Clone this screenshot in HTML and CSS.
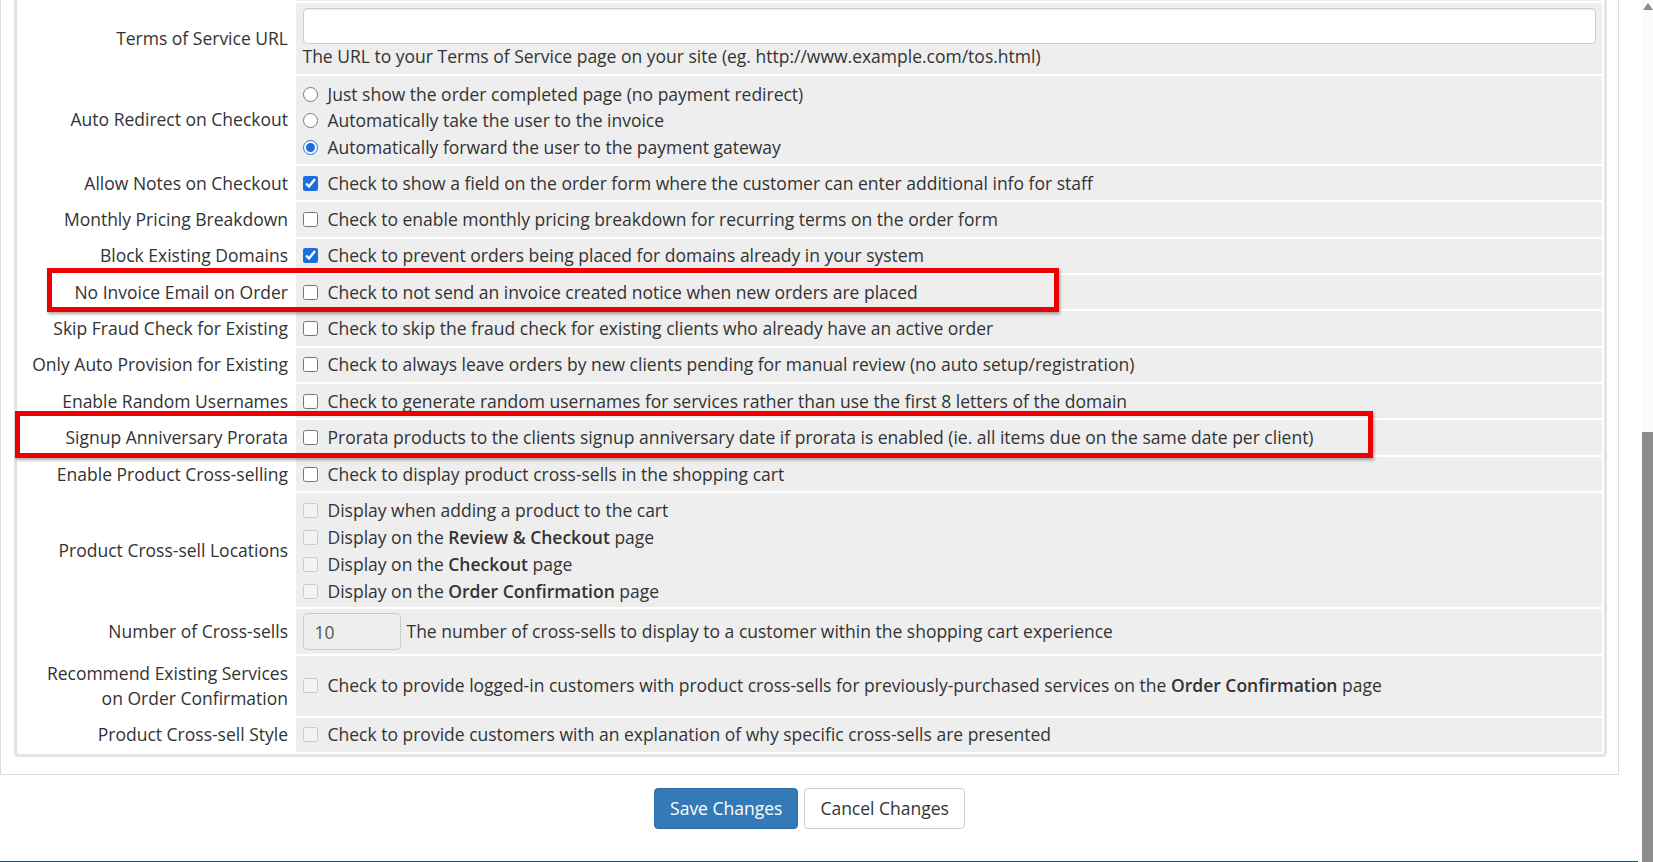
FILE: index.html
```html
<!DOCTYPE html>
<html lang="en">
<head>
    <meta charset="UTF-8">
    <title>Ordering Settings</title>
    <link rel="stylesheet" href="styles.css">
</head>
<body>
    <div class="screen">
        <div class="content">
            <div class="page-box">
                <div class="panel">
                    <table class="form">
                        <!-- row above, scrolled out of view -->
                        <tr class="cut">
                            <td class="label"></td>
                            <td class="field"></td>
                        </tr>
                        <tr>
                            <td class="label">Terms of Service URL</td>
                            <td class="field">
                                <input type="text" class="text-input">
                                <div class="help">The URL to your Terms of Service page on your site (eg. http://www.example.com/tos.html)</div>
                            </td>
                        </tr>
                        <tr>
                            <td class="label">Auto Redirect on Checkout</td>
                            <td class="field radios">
                                <label class="opt line"><input type="radio" name="redirect"> Just show the order completed page (no payment redirect)</label>
                                <label class="opt line"><input type="radio" name="redirect"> Automatically take the user to the invoice</label>
                                <label class="opt line"><input type="radio" name="redirect" checked> Automatically forward the user to the payment gateway</label>
                            </td>
                        </tr>
                        <tr>
                            <td class="label">Allow Notes on Checkout</td>
                            <td class="field"><label class="opt"><input type="checkbox" checked> Check to show a field on the order form where the customer can enter additional info for staff</label></td>
                        </tr>
                        <tr>
                            <td class="label">Monthly Pricing Breakdown</td>
                            <td class="field"><label class="opt"><input type="checkbox"> Check to enable monthly pricing breakdown for recurring terms on the order form</label></td>
                        </tr>
                        <tr>
                            <td class="label">Block Existing Domains</td>
                            <td class="field"><label class="opt"><input type="checkbox" checked> Check to prevent orders being placed for domains already in your system</label></td>
                        </tr>
                        <tr>
                            <td class="label">No Invoice Email on Order</td>
                            <td class="field"><label class="opt"><input type="checkbox"> Check to not send an invoice created notice when new orders are placed</label></td>
                        </tr>
                        <tr>
                            <td class="label">Skip Fraud Check for Existing</td>
                            <td class="field"><label class="opt"><input type="checkbox"> Check to skip the fraud check for existing clients who already have an active order</label></td>
                        </tr>
                        <tr>
                            <td class="label">Only Auto Provision for Existing</td>
                            <td class="field"><label class="opt"><input type="checkbox"> Check to always leave orders by new clients pending for manual review (no auto setup/registration)</label></td>
                        </tr>
                        <tr>
                            <td class="label">Enable Random Usernames</td>
                            <td class="field"><label class="opt"><input type="checkbox"> Check to generate random usernames for services rather than use the first 8 letters of the domain</label></td>
                        </tr>
                        <tr>
                            <td class="label">Signup Anniversary Prorata</td>
                            <td class="field"><label class="opt"><input type="checkbox"> Prorata products to the clients signup anniversary date if prorata is enabled (ie. all items due on the same date per client)</label></td>
                        </tr>
                        <tr>
                            <td class="label">Enable Product Cross-selling</td>
                            <td class="field"><label class="opt"><input type="checkbox"> Check to display product cross-sells in the shopping cart</label></td>
                        </tr>
                        <tr>
                            <td class="label">Product Cross-sell Locations</td>
                            <td class="field locations">
                                <label class="opt line"><input type="checkbox" disabled> Display when adding a product to the cart</label>
                                <label class="opt line"><input type="checkbox" disabled> Display on the&nbsp;<b>Review &amp; Checkout</b>&nbsp;page</label>
                                <label class="opt line"><input type="checkbox" disabled> Display on the&nbsp;<b>Checkout</b>&nbsp;page</label>
                                <label class="opt line"><input type="checkbox" disabled> Display on the&nbsp;<b>Order Confirmation</b>&nbsp;page</label>
                            </td>
                        </tr>
                        <tr>
                            <td class="label">Number of Cross-sells</td>
                            <td class="field number">
                                <div class="opt">
                                    <input type="text" class="num-input" value="10" readonly>
                                    The number of cross-sells to display to a customer within the shopping cart experience
                                </div>
                            </td>
                        </tr>
                        <tr>
                            <td class="label">Recommend Existing Services<br>on Order Confirmation</td>
                            <td class="field"><label class="opt"><input type="checkbox" disabled> Check to provide logged-in customers with product cross-sells for previously-purchased services on the&nbsp;<b>Order Confirmation</b>&nbsp;page</label></td>
                        </tr>
                        <tr>
                            <td class="label">Product Cross-sell Style</td>
                            <td class="field"><label class="opt"><input type="checkbox" disabled> Check to provide customers with an explanation of why specific cross-sells are presented</label></td>
                        </tr>
                    </table>
                </div>
            </div>

            <div class="actions">
                <button class="btn btn-primary">Save Changes</button>
                <button class="btn btn-default">Cancel Changes</button>
            </div>

            <div class="footer-line"></div>
        </div>

        <div class="scrollbar">
            <span class="arrow"></span>
            <div class="thumb"></div>
        </div>
    </div>

    <!-- highlight boxes drawn over the screenshot -->
    <div class="mark mark-invoice"></div>
    <div class="mark mark-prorata"></div>
</body>
</html>
```

FILE: styles.css
```css
* {
    box-sizing: border-box;
}
body {
    margin: 0;
    font-family: "Open Sans", "DejaVu Sans", sans-serif;
    font-size: 17.5px;
    line-height: 25px;
    color: #333;
    background-color: #fff;
    overflow: hidden;
}
.screen {
    display: flex;
    height: 862px;
}
.content {
    width: 1642px;
    display: flex;
    flex-direction: column;
}
.page-box {
    width: 1619px;
    margin-top: -35px;
    padding: 0 11px 17px 13px;
    border: 1px solid #ddd;
    border-top: none;
}
.panel {
    border: 3px solid #e1e5e6;
    border-top: none;
    border-radius: 0 0 4px 4px;
}
.form {
    width: 100%;
    border-spacing: 2px;
}
.form td {
    padding: 4.7px 6px;
    vertical-align: middle;
}
.form .cut td {
    height: 34.4px;
}
.form .label {
    width: 275px;
    text-align: right;
    padding-left: 0;
    background-color: #fff;
}
.form .field {
    background-color: #eee;
    padding-left: 6.5px;
}
.form .radios {
    padding-top: 5px;
    padding-bottom: 3.6px;
}
.form .locations {
    padding-top: 3.5px;
    padding-bottom: 2.5px;
}
.form .number {
    padding-top: 4px;
    padding-bottom: 4px;
}
.opt {
    display: flex;
    align-items: center;
    min-height: 25px;
    white-space: nowrap;
}
.radios .opt.line {
    height: 26.5px;
}
.locations .opt.line {
    height: 27px;
}
.opt b {
    font-weight: 600;
}
input[type="checkbox"],
input[type="radio"] {
    width: 15px;
    height: 15px;
    margin: 0 10px 0 0;
    accent-color: #1a6fdc;
}
.text-input {
    display: block;
    width: 100%;
    height: 36px;
    margin: 0;
    border: 1px solid #ccc;
    border-radius: 4px;
    background-color: #fff;
    box-shadow: inset 0 1px 1px rgba(0, 0, 0, 0.075);
}
.num-input {
    width: 98px;
    height: 37px;
    margin: 0 6px 0 0;
    padding: 0 11px;
    font-family: inherit;
    font-size: 17.5px;
    color: #555;
    background-color: #eee;
    border: 1px solid #ccc;
    border-radius: 4px;
}
.actions {
    display: flex;
    justify-content: center;
    gap: 6px;
    width: 1619px;
    margin-top: 13px;
}
.btn {
    height: 41px;
    padding: 0 15px;
    font-family: inherit;
    font-size: 17.5px;
    border-radius: 4px;
    cursor: pointer;
}
.btn-primary {
    color: #fff;
    background-color: #337ab7;
    border: 1px solid #2e6da4;
}
.btn-default {
    color: #333;
    background-color: #fff;
    border: 1px solid #ccc;
}
.footer-line {
    width: 1638px;
    height: 1px;
    margin-top: auto;
    background-color: #1f4a5b;
}
.scrollbar {
    width: 11px;
    display: flex;
    flex-direction: column;
    background-color: #fbfbfb;
}
.arrow {
    width: 0;
    height: 0;
    margin: 3px auto 0;
    border-left: 5px solid transparent;
    border-right: 5px solid transparent;
    border-bottom: 7px solid #8a8a8a;
}
.thumb {
    height: 430px;
    margin-top: auto;
    background-color: #8c8c8c;
}
.mark {
    position: absolute;
    border: 5px solid #ee0000;
    box-shadow: 1px 2px 3px rgba(0, 0, 0, 0.35);
}
.mark-invoice {
    left: 47px;
    top: 268px;
    width: 1012px;
    height: 44px;
}
.mark-prorata {
    left: 15px;
    top: 411px;
    width: 1358px;
    height: 47px;
}
```
